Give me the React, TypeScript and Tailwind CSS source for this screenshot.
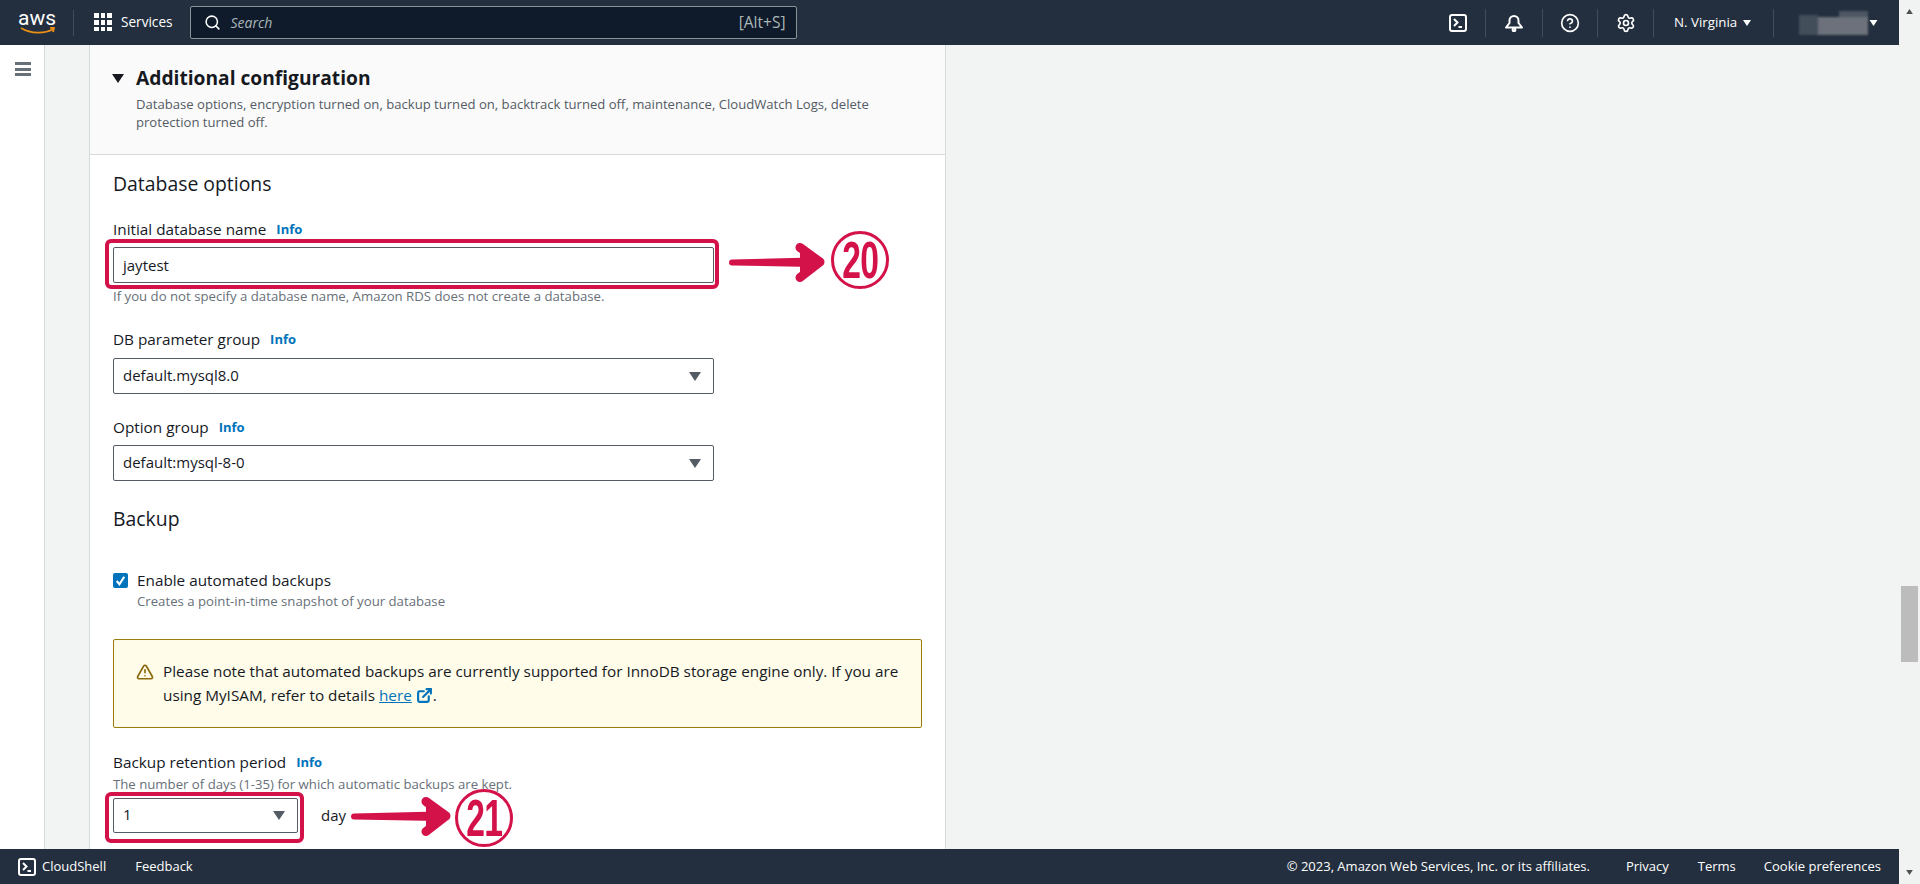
import React from "react";
import { CircleHelp, ExternalLink, Search, Settings, TriangleAlert } from "lucide-react";

function Info() {
  return <span className="ml-[10px] text-[13px] font-bold text-[#0073bb]">Info</span>;
}

function Field({ label }: { label: string }) {
  return (
    <div className="flex h-5 items-center text-[15.3px] leading-5 text-[#16191f]">
      {label}
      <Info />
    </div>
  );
}

function Caret({ className }: { className: string }) {
  return (
    <svg viewBox="0 0 12 9" className={className}>
      <path d="M0 0h12L6 9z" fill="currentColor" />
    </svg>
  );
}

function SelectBox({ value, className }: { value: string; className: string }) {
  return (
    <div className={`flex items-center justify-between rounded-[2px] border border-[#545b64] bg-white pl-[9px] pr-[12px] text-[15px] text-[#16191f] ${className}`}>
      <span className="mt-[-2px]">{value}</span>
      <Caret className="h-[9px] w-3 text-[#545b64]" />
    </div>
  );
}

function TerminalIcon({ className }: { className: string }) {
  return (
    <svg viewBox="0 0 18 18" fill="none" stroke="currentColor" strokeWidth="2" className={className}>
      <rect x="1" y="1" width="16" height="16" rx="2" />
      <path d="M5 5l3.5 3.5L5 12M9.5 13H13" />
    </svg>
  );
}

function BellIcon({ className }: { className: string }) {
  return (
    <svg viewBox="0 0 18 18" fill="none" stroke="currentColor" strokeWidth="2" className={className}>
      <path d="M1 13.5h16L13.5 9V6.5a4.5 4.5 0 0 0-9 0V9z" strokeLinejoin="round" />
      <circle cx="9" cy="15.8" r="1.4" />
    </svg>
  );
}

function GridIcon() {
  return (
    <div className="grid h-[18px] w-[18px] grid-cols-3 gap-[2px]">
      {Array.from({ length: 9 }).map((_, i) => (
        <div key={i} className="bg-white" />
      ))}
    </div>
  );
}

function Circled({ n, className }: { n: string; className: string }) {
  return (
    <div className={`absolute flex h-[58px] w-[58px] items-center justify-center rounded-full border-[3px] border-[#d4124a] ${className}`}>
      <span className="scale-x-[0.66] font-['Liberation_Sans',sans-serif] text-[51px] leading-none font-bold tracking-[-1px] text-[#d4124a]">{n}</span>
    </div>
  );
}

// tail sits at the left edge, the tip ends at length
function Arrow({ length, className }: { length: number; className: string }) {
  const tip = length - 6;
  const barb = tip - 20;
  return (
    <svg width={length} height="46" viewBox={`0 0 ${length} 46`} className={`absolute ${className}`}>
      <path d={`M3 20.5L${tip - 8} 18.5V28L3 26.5A3 3 0 0 1 3 20.5z`} fill="#d4124a" />
      <path d={`M${barb} 8.5L${tip} 23L${barb} 38.5`} fill="#d4124a" stroke="#d4124a" strokeWidth="9" strokeLinecap="round" strokeLinejoin="round" />
    </svg>
  );
}

export default function App() {
  return (
    <div className="relative flex h-[884px] w-full overflow-hidden bg-[#f2f3f3] font-['Open_Sans',sans-serif]">
      <div className="flex w-[1899px] flex-col">
        {/* Top nav */}
        <header className="flex h-[45px] shrink-0 items-center bg-[#232f3e] text-white">
          <div className="flex h-[26px] w-[74px] flex-col items-center border-r border-[#414d5c] pl-[1px]">
            <span className="mt-[-5px] font-['Roboto',sans-serif] text-[21px] leading-[26px]">aws</span>
            <svg viewBox="0 0 36 8" className="mt-[-4px] ml-[2px] h-2 w-9">
              <path d="M1 1c10 6 24 6 32 1M30 0.5l4 0.5-1 4" fill="none" stroke="#ec8f16" strokeWidth="1.8" />
            </svg>
          </div>
          <div className="ml-5 flex items-center">
            <GridIcon />
            <span className="ml-[9px] text-[13.6px]">Services</span>
          </div>
          <div className="ml-[17px] flex h-[33px] w-[607px] items-center rounded-[2px] border border-[#879596] bg-[#0f1b2a] pr-[10px] pl-[13px] text-[14px]">
            <Search className="h-[17px] w-[17px]" strokeWidth={2.2} />
            <span className="ml-[10px] italic text-[#aab7b8]">Search</span>
            <span className="ml-auto text-[15.5px] text-[#aab7b8]">[Alt+S]</span>
          </div>
          <div className="ml-auto flex h-[28px] items-center">
            <div className="flex h-full w-[56px] items-center justify-center border-r border-[#414d5c]">
              <TerminalIcon className="h-[18px] w-[18px]" />
            </div>
            <div className="flex h-full w-[57px] items-center justify-center border-r border-[#414d5c]">
              <BellIcon className="h-[18px] w-[18px]" />
            </div>
            <div className="flex h-full w-[55px] items-center justify-center border-r border-[#414d5c]">
              <CircleHelp className="h-5 w-5" strokeWidth={2} />
            </div>
            <div className="flex h-full w-[56px] items-center justify-center border-r border-[#414d5c]">
              <Settings className="h-5 w-5" strokeWidth={2} />
            </div>
            <div className="flex h-full w-[120px] items-center border-r border-[#414d5c] pl-5 text-[13.3px]">
              N. Virginia
              <Caret className="ml-[6px] h-[6px] w-[8px]" />
            </div>
            <div className="flex h-full w-[125px] items-center pl-[25px]">
              {/* blurred account name */}
              <div className="relative h-[24px] w-[69px] blur-[1px]">
                <div className="absolute top-[4px] left-0 h-[20px] w-[19px] bg-[#434e5b]" />
                <div className="absolute top-[6px] left-[19px] h-[18px] w-[50px] bg-[#6c717b]" />
                <div className="absolute top-0 left-[40px] h-[6px] w-[29px] bg-[#4d5763]" />
              </div>
              <Caret className="ml-[1px] h-[6px] w-[9px]" />
            </div>
          </div>
        </header>

        {/* Content */}
        <div className="flex min-h-0 flex-1">
          <aside className="flex w-[45px] shrink-0 justify-center border-r border-[#d5dbdb] bg-white pt-[17px] pl-[1px]">
            <div className="flex h-[14px] w-4 flex-col justify-between">
              <div className="h-[3px] bg-[#687078]" />
              <div className="h-[3px] bg-[#687078]" />
              <div className="h-[3px] bg-[#687078]" />
            </div>
          </aside>
          <main className="ml-[44px] w-[857px] overflow-hidden border-x border-[#d5dbdb] bg-white">
            <div className="flex h-[110px] border-b border-[#d5dbdb] bg-[#fafafa] pt-[19px] pl-[22px]">
              <Caret className="mt-[10px] h-[9px] w-3 text-[#16191f]" />
              <div className="ml-[12px]">
                <h2 className="text-[19.2px] leading-7 font-bold text-[#16191f]">Additional configuration</h2>
                <p className="mt-[3px] w-[760px] text-[13.1px] leading-[18px] text-[#545b64]">
                  Database options, encryption turned on, backup turned on, backtrack turned off, maintenance, CloudWatch Logs, delete protection turned off.
                </p>
              </div>
            </div>

            <div className="pt-[17px] pr-[23px] pl-[23px]">
              <h3 className="text-[19.4px] leading-6 text-[#16191f]">Database options</h3>

              <div className="mt-[23px]"><Field label="Initial database name" /></div>
              <div className="mt-2 flex h-9 w-[601px] items-center rounded-[2px] border border-[#545b64] pl-[9px] text-[15px] text-[#16191f]">jaytest</div>
              <p className="mt-[5px] text-[13.2px] leading-4 text-[#687078]">If you do not specify a database name, Amazon RDS does not create a database.</p>

              <div className="mt-[25px]"><Field label="DB parameter group" /></div>
              <SelectBox value="default.mysql8.0" className="mt-[9px] h-9 w-[601px]" />

              <div className="mt-[23px]"><Field label="Option group" /></div>
              <SelectBox value="default:mysql-8-0" className="mt-2 h-9 w-[601px]" />

              <h3 className="mt-[26px] text-[19.4px] leading-6 text-[#16191f]">Backup</h3>

              <div className="mt-[39px] flex h-5 items-center text-[15.3px] text-[#16191f]">
                <div className="flex h-[15px] w-[15px] items-center justify-center rounded-[2px] bg-[#0073bb]">
                  <svg viewBox="0 0 14 14" className="h-[15px] w-[15px]" fill="none" stroke="white" strokeWidth="2">
                    <path d="M3.5 7.5L6 10.5L10.5 3.5" />
                  </svg>
                </div>
                <span className="ml-[9px]">Enable automated backups</span>
              </div>
              <p className="mt-[3px] ml-6 text-[13.2px] leading-4 text-[#687078]">Creates a point-in-time snapshot of your database</p>

              <div className="mt-[30px] flex h-[89px] w-[809px] rounded-[2px] border border-[#9a7b0b] bg-[#fffce9] pt-[19px] pl-[22px] text-[15.3px] leading-[24px] text-[#16191f]">
                <TriangleAlert className="mt-1 h-[18px] w-[18px] shrink-0 text-[#8a6a0c]" strokeWidth={2.2} />
                <p className="ml-[9px] w-[745px]">
                  Please note that automated backups are currently supported for InnoDB storage engine only. If you are using MyISAM, refer to details{" "}
                  <span className="text-[#0073bb] underline">here</span>{" "}
                  <ExternalLink className="inline h-[17px] w-[17px] align-[-3px] text-[#0073bb]" strokeWidth={3} />.
                </p>
              </div>

              <div className="mt-6"><Field label="Backup retention period" /></div>
              <p className="mt-1 text-[13.2px] leading-4 text-[#687078]">The number of days (1-35) for which automatic backups are kept.</p>
              <div className="mt-[6px] flex items-center">
                <SelectBox value="1" className="h-[35px] w-[185px]" />
                <span className="ml-[23px] text-[15px] text-[#16191f]">day</span>
              </div>
            </div>
          </main>
        </div>

        {/* Footer */}
        <footer className="flex h-[35px] shrink-0 items-center bg-[#232f3e] text-[13px] text-white">
          <TerminalIcon className="ml-[18px] h-[18px] w-[18px]" />
          <span className="ml-[6px]">CloudShell</span>
          <span className="ml-[29px]">Feedback</span>
          <span className="ml-auto">© 2023, Amazon Web Services, Inc. or its affiliates.</span>
          <span className="ml-9">Privacy</span>
          <span className="ml-[29px]">Terms</span>
          <span className="mr-[18px] ml-7">Cookie preferences</span>
        </footer>
      </div>

      {/* Scrollbar */}
      <div className="relative w-[21px] bg-[#f1f3f3]">
        <Caret className="absolute top-[9px] left-[6px] h-[5px] w-[9px] rotate-180 text-[#505050]" />
        <div className="absolute top-[586px] left-[2px] h-[76px] w-[17px] bg-[#bcbcbc]" />
        <Caret className="absolute top-[870px] left-[6px] h-[5px] w-[9px] text-[#505050]" />
      </div>

      {/* Annotations */}
      <div className="absolute top-[239px] left-[105px] h-[50px] w-[614px] rounded-[6px] border-[4px] border-[#d4124a]" />
      <Arrow length={97} className="top-[239px] left-[729px]" />
      <Circled n="20" className="top-[231px] left-[831px]" />
      <div className="absolute top-[792px] left-[105px] h-[51px] w-[199px] rounded-[6px] border-[4px] border-[#d4124a]" />
      <Arrow length={101} className="top-[793px] left-[351px]" />
      <Circled n="21" className="top-[789px] left-[455px]" />
    </div>
  );
}
